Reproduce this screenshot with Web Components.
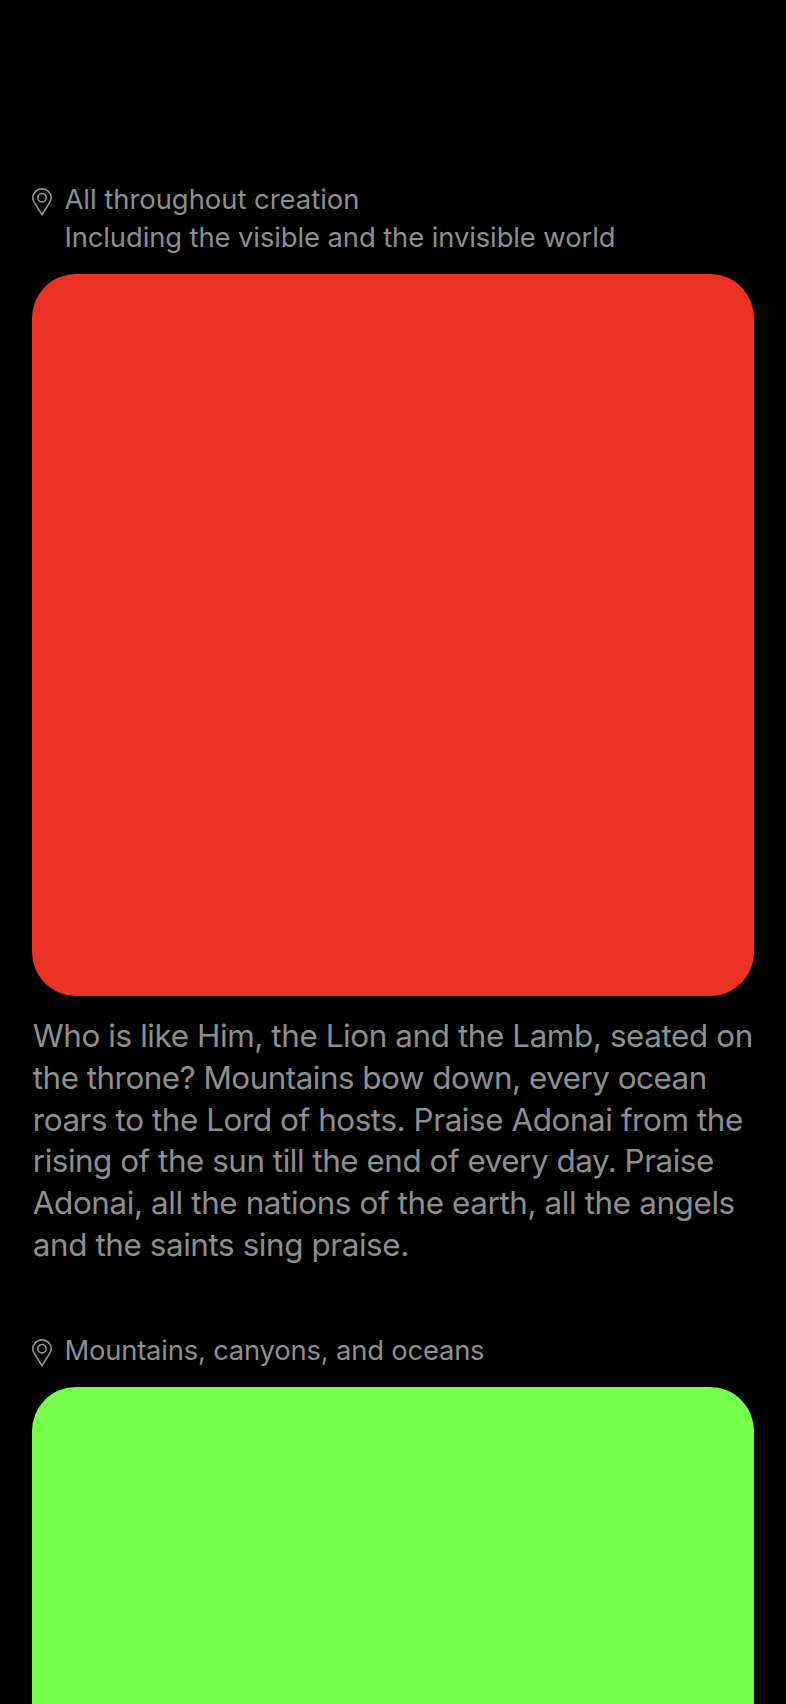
<!DOCTYPE html>
<html lang="en"><head><meta charset="utf-8"><title>Creation</title>
<style>html,body{margin:0;background:#000}body{height:1704px;overflow:hidden;font-family:Inter,"Liberation Sans",sans-serif}</style></head>
<body>
<place-feed>
<place-card color="#eb3323"><fit-line slot="place" width="295">All throughout creation</fit-line><fit-line slot="place" width="551">Including the visible and the invisible world</fit-line>
<fit-line width="720">Who is like Him, the Lion and the Lamb, seated on</fit-line><fit-line width="674">the throne? Mountains bow down, every ocean</fit-line><fit-line width="710">roars to the Lord of hosts. Praise Adonai from the</fit-line><fit-line width="681">rising of the sun till the end of every day. Praise</fit-line><fit-line width="702">Adonai, all the nations of the earth, all the angels</fit-line><fit-line width="376">and the saints sing praise.</fit-line></place-card>
<place-card color="#77ff4d"><fit-line slot="place" width="420">Mountains, canyons, and oceans</fit-line></place-card>
</place-feed>
<script>
const define=(name,html,setup)=>customElements.define(name,class extends HTMLElement{
 connectedCallback(){if(this.shadowRoot)return;this.attachShadow({mode:'open'}).innerHTML=html;if(setup)setup(this)}
});
define('place-feed','<style>:host{display:flex;flex-direction:column;gap:65px;box-sizing:border-box;height:1704px;overflow:hidden;padding:181px 32px 0}::slotted(*){flex:none}</style><slot></slot>');
define('pin-icon','<style>:host{display:block;width:20px;height:28px}svg{display:block}</style><svg width="20" height="28" viewBox="0 0 20 28" fill="none" stroke="#98989a" stroke-width="1.6"><path d="M10 26.6 2.1 14.1A9 9 0 0 1 .8 9.6 9 9 0 0 1 10 .9a9 9 0 0 1 9.2 8.7 9 9 0 0 1-1.3 4.5Z"/><circle cx="10" cy="9.7" r="4.2"/></svg>');
define('fit-line','<style>:host{display:block;white-space:nowrap}span{display:inline-block}</style><span><slot></slot></span>',el=>{
 const s=el.shadowRoot.querySelector('span');
 requestAnimationFrame(()=>{const w=s.getBoundingClientRect().width;s.style.letterSpacing=((+el.getAttribute('width')-w)/el.textContent.length)+'px'});
});
define('place-card','<style>:host{display:block;color:#8e8e93}.head{display:flex;gap:12.4px;font-size:27.4px;line-height:38px;margin-bottom:17px}.names{margin-top:-1px;padding-bottom:1px}pin-icon{margin-top:7px}.tile{height:722px;border-radius:44px}.copy{font-size:31.4px;line-height:41.85px;padding:19.9px 0 0 .8px}</style><div class="head"><pin-icon></pin-icon><div class="names"><slot name="place"></slot></div></div><div class="tile"></div><div class="copy"><slot></slot></div>',el=>{
 el.shadowRoot.querySelector('.tile').style.background=el.getAttribute('color');
});
</script></body></html>
